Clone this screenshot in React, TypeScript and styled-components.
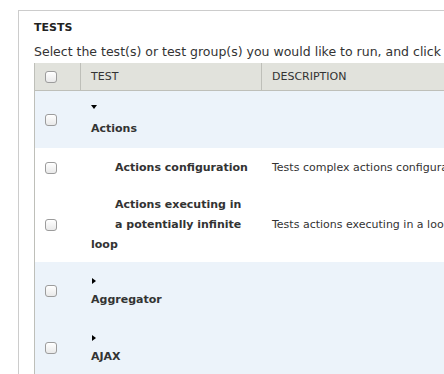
import React from "react";
import styled, { createGlobalStyle } from "styled-components";

const GlobalStyle = createGlobalStyle`
  html, body {
    margin: 0;
    padding: 0;
    overflow: hidden;
    background: #fff;
  }
  body {
    font-family: "DejaVu Sans", Verdana, sans-serif;
    color: #333;
  }
`;

const Fieldset = styled.section`
  margin: 10px 0 0 18px;
  width: 1100px;
  min-height: 400px;
  border: 1px solid #ccc;
  padding: 9px 0 0 15px;
`;

const Legend = styled.h2`
  margin: 0;
  font-size: 11px;
  line-height: 16px;
  font-weight: bold;
  text-transform: uppercase;
  color: #222;
`;

const Intro = styled.p`
  margin: 7px 0 2px;
  font-size: 12.5px;
  line-height: 18px;
  white-space: nowrap;
`;

const Table = styled.table`
  width: 1000px;
  border-collapse: separate;
  border-spacing: 0;
  border-left: 1px solid #bebfb9;
  table-layout: fixed;
  font-size: 11px;
`;

const HeaderCell = styled.th<{ $width?: number; $last?: boolean }>`
  ${(p) => (p.$width ? `width: ${p.$width}px;` : "")}
  background: #e1e2dc;
  border-bottom: 1px solid #bebfb9;
  border-right: ${(p) => (p.$last ? "none" : "1px solid #bebfb9")};
  padding: 4px 10px;
  line-height: 19px;
  font-weight: normal;
  text-align: left;
  text-transform: uppercase;
  color: #333;
`;

const Row = styled.tr<{ $group?: boolean }>`
  background: ${(p) => (p.$group ? "#ecf3fa" : "#fff")};
`;

const CheckCell = styled.td`
  padding: 0 10px;
  vertical-align: middle;
`;

const NameCell = styled.td<{ $group?: boolean }>`
  padding: ${(p) => (p.$group ? "8px 10px 9px" : "7px 10px")};
  line-height: 20px;
  font-weight: bold;
  vertical-align: middle;
`;

const DescCell = styled.td`
  padding: 11px 10px;
  line-height: 18px;
  vertical-align: middle;
  white-space: nowrap;
  overflow: hidden;
`;

const Checkbox = styled.input.attrs({ type: "checkbox" })`
  appearance: none;
  display: block;
  margin: 0;
  width: 12px;
  height: 12px;
  border: 1px solid #9c9c9c;
  border-radius: 3px;
  background: linear-gradient(#ffffff, #e9e9e9);
  box-shadow: inset 0 1px 0 #fff;
`;

const ToggleLine = styled.div`
  height: 20px;
  display: flex;
  align-items: center;
`;

const Toggle = styled.span<{ $open?: boolean }>`
  display: block;
  width: 0;
  height: 0;
  ${(p) =>
    p.$open
      ? `
    margin: -4px 0 0 0;
    border-left: 3.5px solid transparent;
    border-right: 3.5px solid transparent;
    border-top: 4px solid #000;
  `
      : `
    margin: 1px 0 0 1px;
    border-top: 3px solid transparent;
    border-bottom: 3px solid transparent;
    border-left: 4px solid #000;
  `}
`;

const Indent = styled.span`
  float: left;
  width: 24px;
  height: 21px;
`;

type Test = { name: string; description: string };
type Group = { name: string; open: boolean; tests: Test[] };

const groups: Group[] = [
  {
    name: "Actions",
    open: true,
    tests: [
      {
        name: "Actions configuration",
        description:
          "Tests complex actions configuration by adding, editing, and deleting a complex action.",
      },
      {
        name: "Actions executing in a potentially infinite loop",
        description: "Tests actions executing in a loop, and makes sure they abort properly.",
      },
    ],
  },
  { name: "Aggregator", open: false, tests: [] },
  { name: "AJAX", open: false, tests: [] },
];

const App = (): JSX.Element => {
  return (
    <React.Fragment>
      <GlobalStyle />
      <Fieldset>
        <Legend>Tests</Legend>
        <Intro>
          Select the test(s) or test group(s) you would like to run, and click Run tests.
        </Intro>
        <Table>
          <thead>
            <tr>
              <HeaderCell $width={25}>
                <Checkbox aria-label="Select all" />
              </HeaderCell>
              <HeaderCell $width={160}>Test</HeaderCell>
              <HeaderCell $last>Description</HeaderCell>
            </tr>
          </thead>
          <tbody>
            {groups.map((group) => (
              <React.Fragment key={group.name}>
                <Row $group>
                  <CheckCell>
                    <Checkbox aria-label={group.name} />
                  </CheckCell>
                  <NameCell $group>
                    <ToggleLine>
                      <Toggle $open={group.open} />
                    </ToggleLine>
                    {group.name}
                  </NameCell>
                  <DescCell />
                </Row>
                {group.open &&
                  group.tests.map((test) => (
                    <Row key={test.name}>
                      <CheckCell>
                        <Checkbox aria-label={test.name} />
                      </CheckCell>
                      <NameCell>
                        <Indent />
                        {test.name}
                      </NameCell>
                      <DescCell>{test.description}</DescCell>
                    </Row>
                  ))}
              </React.Fragment>
            ))}
          </tbody>
        </Table>
      </Fieldset>
    </React.Fragment>
  );
};

export default App;
